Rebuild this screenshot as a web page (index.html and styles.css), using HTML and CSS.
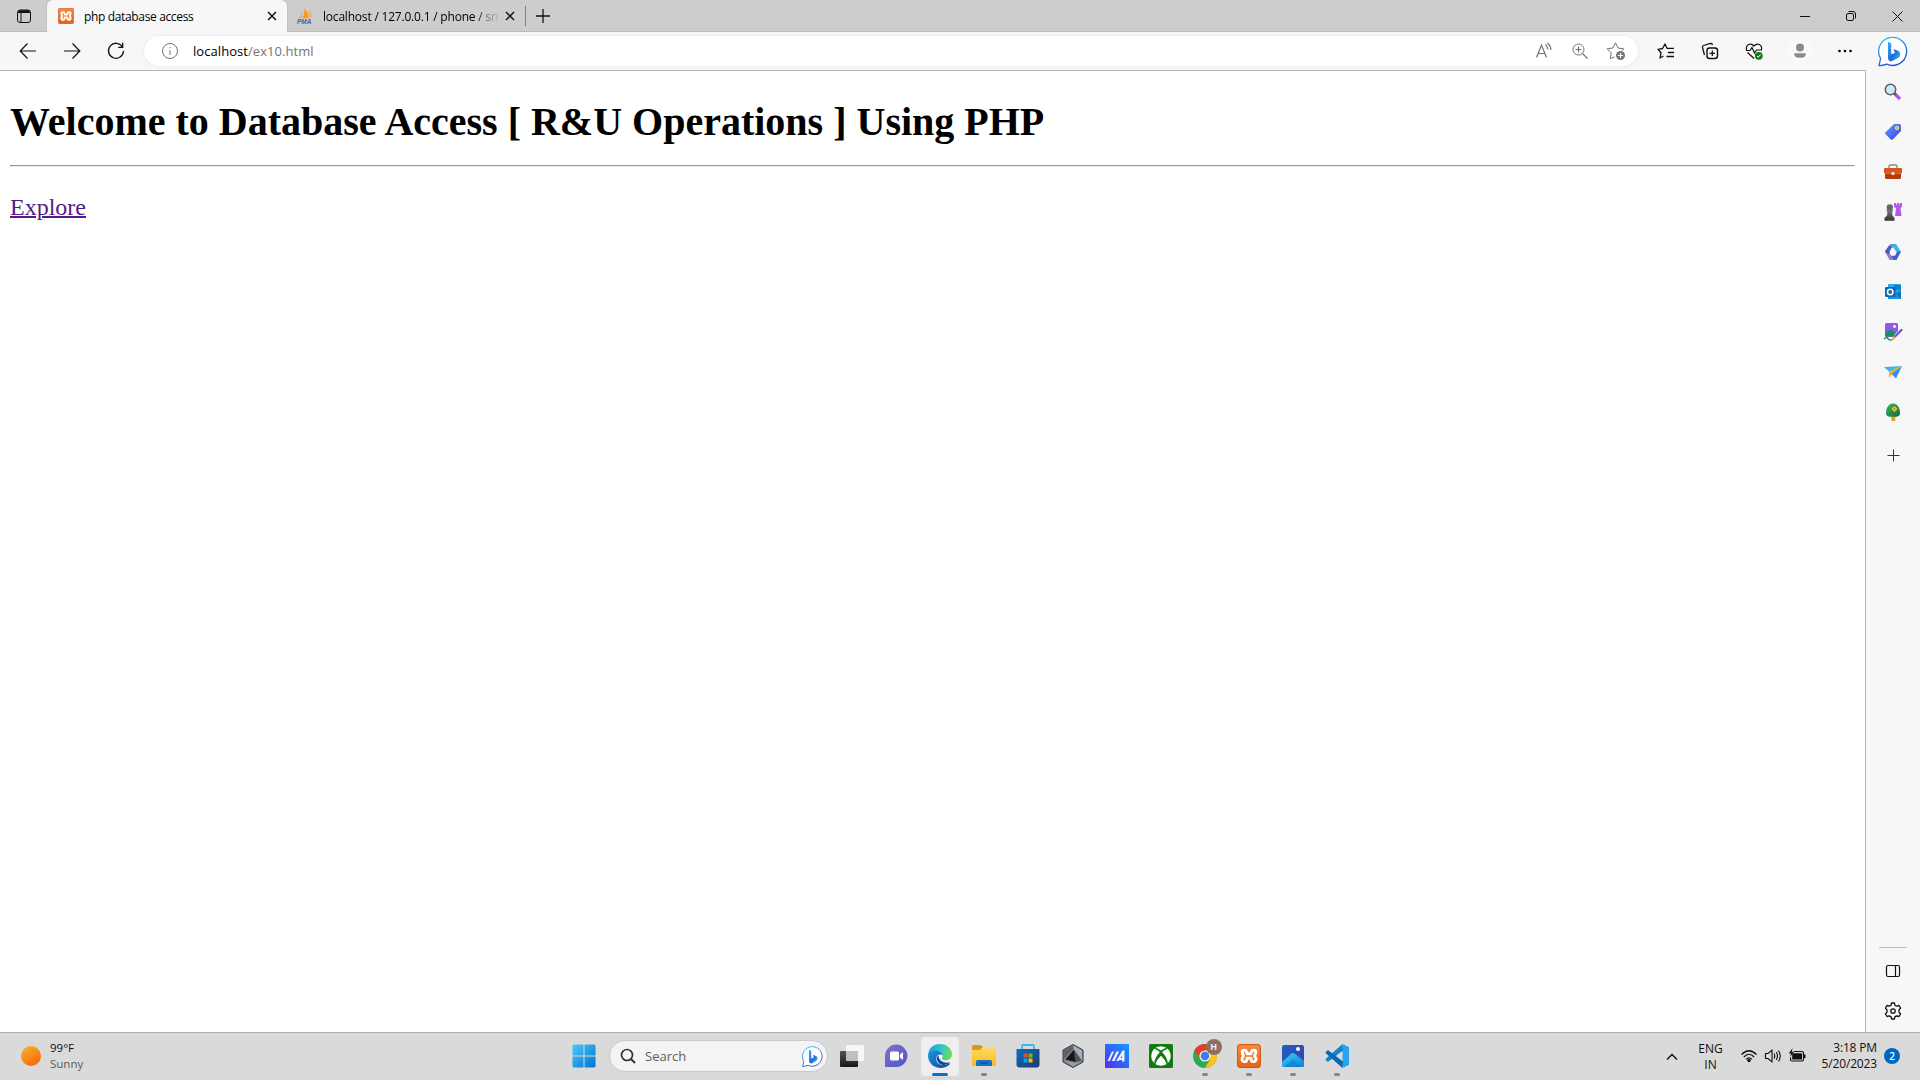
FILE: index.html
```html
<!DOCTYPE html>
<html lang="en">
<head>
<meta charset="utf-8">
<title>php database access</title>
<link rel="stylesheet" href="styles.css">
</head>
<body>
<svg class="defs" width="0" height="0" aria-hidden="true">
  <defs>
    <linearGradient id="bingRing" x1="0" y1="0" x2="0.5" y2="1"><stop offset="0" stop-color="#2fc3ee"/><stop offset="1" stop-color="#234fd0"/></linearGradient>
    <linearGradient id="bingB" x1="0" y1="0" x2="1" y2="1"><stop offset="0" stop-color="#36b6f4"/><stop offset=".55" stop-color="#2268e0"/><stop offset="1" stop-color="#35c5e8"/></linearGradient>
    <linearGradient id="sun" x1="0" y1="0" x2=".6" y2="1"><stop offset="0" stop-color="#f8b62d"/><stop offset="1" stop-color="#f76b0c"/></linearGradient>
    <linearGradient id="win" x1="0" y1="0" x2="1" y2="1"><stop offset="0" stop-color="#4cc8f8"/><stop offset="1" stop-color="#0072d2"/></linearGradient>
    <linearGradient id="tag" x1="0" y1="0" x2="1" y2="1"><stop offset="0" stop-color="#5fa0ff"/><stop offset="1" stop-color="#3d3fe0"/></linearGradient>
    <linearGradient id="purple" x1="0" y1="0" x2="1" y2="1"><stop offset="0" stop-color="#8a6fc8"/><stop offset="1" stop-color="#4a55c8"/></linearGradient>
    <linearGradient id="folder" x1="0" y1="0" x2="0" y2="1"><stop offset="0" stop-color="#ffd95e"/><stop offset="1" stop-color="#f9bb28"/></linearGradient>
    <linearGradient id="store" x1="0" y1="0" x2="1" y2="1"><stop offset="0" stop-color="#0b70c4"/><stop offset="1" stop-color="#20386c"/></linearGradient>
    <linearGradient id="dark" x1="0" y1="0" x2="0" y2="1"><stop offset="0" stop-color="#555"/><stop offset="1" stop-color="#161616"/></linearGradient>
    <linearGradient id="pawn" x1="0" y1="0" x2="0" y2="1"><stop offset="0" stop-color="#777"/><stop offset="1" stop-color="#333"/></linearGradient>
    <linearGradient id="asus" x1="0" y1="1" x2="1" y2="0"><stop offset="0" stop-color="#5a2bf0"/><stop offset="1" stop-color="#0c9cff"/></linearGradient>
    <linearGradient id="edgeTop" x1="0" y1=".3" x2="1" y2=".5"><stop offset="0" stop-color="#1b9de2"/><stop offset=".55" stop-color="#35c7c5"/><stop offset="1" stop-color="#6be04c"/></linearGradient>
    <linearGradient id="edgeLow" x1="0" y1="0" x2="1" y2="1"><stop offset="0" stop-color="#1d93dc"/><stop offset="1" stop-color="#0d4a98"/></linearGradient>
    <linearGradient id="photo" x1="0" y1="0" x2="1" y2="1"><stop offset="0" stop-color="#1d63c4"/><stop offset="1" stop-color="#4436a8"/></linearGradient>
    <linearGradient id="sky" x1="0" y1="0" x2="1" y2="1"><stop offset="0" stop-color="#3ed0f8"/><stop offset="1" stop-color="#0d7fd8"/></linearGradient>
    <linearGradient id="xampp" x1="0" y1="0" x2="0" y2="1"><stop offset="0" stop-color="#fb8a36"/><stop offset="1" stop-color="#e3641a"/></linearGradient>
    <linearGradient id="tree" x1="0" y1="0" x2="1" y2="1"><stop offset="0" stop-color="#3cb85c"/><stop offset="1" stop-color="#126c3c"/></linearGradient>
    <symbol id="bing" viewBox="0 0 30 30">
      <path d="M1 29.2 2.6 22A14 14 0 1 1 8.800 27.600Q5 29 1 29.200Z" fill="#fff" stroke="url(#bingRing)" stroke-width="1.300" stroke-linejoin="round"/>
      <path d="M10 5.300 13.200 6.700V17.800L17 16.500 15.700 13.300Q15.500 12.500 16.300 12.800L20 14.300Q22.400 15.500 22.200 18.300 22 20.400 20 21.600L14.200 24.600Q12.500 25.300 11 24 10 23 10 21.500Z" fill="url(#bingB)"/>
    </symbol>
    <symbol id="xamppLogo" viewBox="0 0 24 24">
      <rect x=".5" y=".5" width="23" height="23" rx="2.500" fill="url(#xampp)" stroke="#c65c1e"/>
      <path d="M7.500 6.200C5.500 6.200 4.700 7.300 5.300 8.800L6.300 12 5.200 14.300C4.500 16.400 6 17.900 8 17.600 9.900 17.400 10 16.200 9.900 14.200H14.100C14 16.200 14.100 17.400 16 17.600 18 17.900 19.500 16.400 18.800 14.300L17.700 12 18.700 8.800C19.300 7.300 18.500 6.200 16.500 6.200 14.200 6.200 14.100 7.900 14 9.800H10C9.900 7.900 9.800 6.200 7.500 6.200Z" fill="none" stroke="#fff" stroke-width="2.900" stroke-linejoin="round"/>
    </symbol>
    <symbol id="star" viewBox="0 0 20 20">
      <path d="M8.500 16 4.300 17.500 5.200 11.800 1.200 7.800 6.900 7 9.500 1.800 12.100 7 17.800 7.800 15.800 9.800" stroke-linejoin="round"/>
    </symbol>
  </defs>
</svg>

<div class="desktop">
  <header class="tabstrip">
    <div class="tab-actions"><svg class="line" width="16" height="16" viewBox="0 0 16 16"><rect x="1.500" y="2" width="13" height="12.500" rx="2.500"/><path d="M1.500 4.500H14.500M5 5V14" /><path d="M2.500 3.500H13.500" stroke-width="2.500"/></svg></div>
    <div class="tab tab-active">
      <svg width="16" height="16"><use href="#xamppLogo"/></svg>
      <span class="tab-title title-one">php database access</span>
      <svg class="line close" width="10" height="10" viewBox="0 0 10 10"><path d="M1 1 9 9M9 1 1 9" stroke-width="1.500"/></svg>
    </div>
    <div class="tab">
      <svg width="17" height="16" viewBox="0 0 17 16"><path d="M5.500 3V10H1.500Q4.500 7 5.500 3Z" fill="#e3ad72"/><path d="M7 .5Q12 5 11.500 10L6 10.500Q8 5 7 .5Z" fill="#f89c1c"/><path d="M11.500 2Q15.500 6 15 10H12.300Z" fill="#f5b455"/><text x="0" y="15.500" class="pma">PMA</text></svg>
      <span class="tab-title title-two">localhost / 127.0.0.1 / phone / sm</span>
      <svg class="line close" width="10" height="10" viewBox="0 0 10 10"><path d="M1 1 9 9M9 1 1 9" stroke-width="1.500"/></svg>
    </div>
    <div class="new-tab"><svg class="line" width="14" height="14" viewBox="0 0 14 14"><path d="M7 0V14M0 7H14" stroke-width="1.300"/></svg></div>
    <div class="window-controls">
      <span><svg class="line" width="10" height="10" viewBox="0 0 10 10"><path d="M0 5.500H10"/></svg></span>
      <span><svg class="line" width="12" height="12" viewBox="0 0 12 12"><rect x="1.500" y="3.500" width="7" height="7" rx="1.500"/><path d="M3.500 1.500H8Q10.500 1.500 10.500 4V8.500"/></svg></span>
      <span><svg class="line" width="11" height="11" viewBox="0 0 11 11"><path d="M.5 .5 10.500 10.500M10.500 .5 .5 10.500"/></svg></span>
    </div>
  </header>

  <div class="browser">
    <div class="main">
      <nav class="toolbar">
        <span class="tool"><svg class="line" width="18" height="18" viewBox="0 0 18 18"><path d="M17 9H1.500M8.500 1.500 1.200 9 8.500 16.500" stroke-width="1.200"/></svg></span>
        <span class="tool"><svg class="line" width="18" height="18" viewBox="0 0 18 18"><path d="M1 9H16.500M9.500 1.500 16.800 9 9.500 16.500" stroke-width="1.200"/></svg></span>
        <span class="tool"><svg class="line" width="18" height="18" viewBox="0 0 18 18"><path d="M15.500 5A7.500 7.500 0 1 0 16.500 9M15.700 .8V5.300H11.200" stroke-width="1.300"/></svg></span>
        <div class="address">
          <svg class="line gray" width="18" height="18" viewBox="0 0 18 18"><circle cx="9" cy="9" r="7.500"/><path d="M9 8V13M9 5V6.300"/></svg>
          <span class="url">localhost<span class="path">/ex10.html</span></span>
          <span class="address-icon"><svg class="line gray" width="18" height="18" viewBox="0 0 18 18"><path d="M1.500 15.500 6.500 3 11.500 15.500M3.300 11.500H9.800M10.500 2.500Q13 4.500 13 7.500M12.500 1Q16 4 15.800 8" stroke-width="1.200"/></svg></span>
          <span class="address-icon"><svg class="line gray" width="18" height="18" viewBox="0 0 18 18"><circle cx="7.500" cy="7.500" r="5.500"/><path d="M11.500 11.500 16.500 16.500M7.500 4.500V10.500M4.500 7.500H10.500" stroke-width="1.200"/></svg></span>
          <span class="address-icon"><svg class="line gray" width="20" height="20" viewBox="0 0 20 20"><use href="#star"/><circle cx="14.500" cy="14.500" r="4.500" fill="#777" stroke="none"/><path d="M14.500 12V17M12 14.500H17" stroke="#fff"/></svg></span>
        </div>
        <span class="tool fav"><svg class="line" width="18" height="18" viewBox="0 0 18 18"><path d="M6.500 14 3 16 4 10.700 1 7.300 5.500 6.500 8 2 10 6.300H17M11 10.500H17M9.500 14.500H17" stroke-width="1.300" stroke-linejoin="round"/></svg></span>
        <span class="tool"><svg class="line" width="18" height="18" viewBox="0 0 18 18"><rect x="6" y="6" width="10.500" height="10.500" rx="2.500" stroke-width="1.400"/><path d="M11.300 8.500V14M8.500 11.300H14M3.500 13 1.500 5.500Q1 4 2.500 3.500L9.500 1.500Q11 1.200 11.500 3" stroke-width="1.300"/></svg></span>
        <span class="tool"><svg class="line" width="18" height="18" viewBox="0 0 18 18"><path d="M1.500 8C.5 2 6 .500 9 4 12 .500 17.500 2 16.500 8M2.500 10.500 9 16.500M1 8.500H5L7 5.500 9.500 11 11.500 8H17" stroke-width="1.200"/><circle cx="13.800" cy="13.800" r="3.900" fill="#107c10" stroke="none"/><path d="m12 14 1.300 1.200 2.300-2.700" stroke="#fff"/></svg></span>
        <span class="tool profile"><svg width="24" height="24" viewBox="0 0 24 24"><circle cx="12" cy="12" r="12" fill="#fafafa"/><circle cx="12" cy="8.500" r="4" fill="#8b8b8b"/><path d="M6.300 14.200H17.700Q18.500 18.800 12 18.800T6.300 14.200Z" fill="#8b8b8b"/></svg></span>
        <span class="tool more"><svg width="16" height="4" viewBox="0 0 16 4"><circle cx="2.500" cy="2" r="1.300"/><circle cx="8" cy="2" r="1.300"/><circle cx="13.500" cy="2" r="1.300"/></svg></span>
      </nav>
      <main class="page">
        <h1>Welcome to Database Access [ R&amp;U Operations ] Using PHP</h1>
        <hr>
        <a href="#">Explore</a>
      </main>
    </div>

    <aside class="sidebar">
      <span class="side-bing"><svg width="30" height="31"><use href="#bing"/></svg></span>
      <span><svg width="18" height="18" viewBox="0 0 18 18"><path d="m10.500 10.500 5.500 5.500" stroke="#b94ee8" stroke-width="3.200"/><path d="m9.500 9.500 2.300 2.300" stroke="#555" stroke-width="2"/><circle cx="6.500" cy="6.500" r="5.200" fill="#cdeaf8" stroke="#5f5f5f" stroke-width="1.500"/></svg></span>
      <span><svg width="18" height="18" viewBox="0 0 18 18"><path d="M10 1H15.500Q17 1 17 2.500V8L9 16.300Q7.800 17.400 6.600 16.300L1.500 11.300Q.6 10.200 1.500 9.200Z" fill="url(#tag)"/><circle cx="13" cy="5" r="1.700" fill="#d9b23d" stroke="#ffe15c"/></svg></span>
      <span><svg width="18" height="16" viewBox="0 0 18 16"><path d="M5 5V2.500Q5 1 6.500 1H11.500Q13 1 13 2.500V5" fill="none" stroke="#888" stroke-width="1.400"/><rect y="4" width="18" height="5.500" rx="1" fill="#d9551e"/><path d="M1 9.500H17V13.500Q17 15 15.500 15H2.500Q1 15 1 13.500Z" fill="#b83a12"/><circle cx="9" cy="9.500" r="1.700" fill="#ddd"/></svg></span>
      <span><svg width="18" height="18" viewBox="0 0 18 18"><path d="M10 0H12V1.500H13V0H15V1.500H16V0H18V4L16.500 5 17.500 13H11L12 5 10 4Z" fill="#b755ef"/><circle cx="5.800" cy="4.500" r="3.200" fill="#666"/><path d="M2.500 7H9V8.500H8L8.500 12.500 10.500 15V17.800H.5V15L3 12.500 3.500 8.500H2.500Z" fill="url(#pawn)"/></svg></span>
      <span><svg width="18" height="18" viewBox="0 0 18 18"><path d="M6.500 1H11.500L7.500 4.500 5.500 8.500V12.500L3 12 .8 8.500Z" fill="#5a8ee0"/><path d="M9.500 1H12L16.800 8.500 14.500 13 12.800 9.500 9.500 4.500H6.500Z" fill="#36b4e6"/><path d="M17 8.500 12.500 17H8L6 12.800H11L13 9Z" fill="#3a62cc"/><path d="M1 8.500 3.500 11.500H6.500L9.500 17H5.500Z" fill="#a774d2"/><path d="M5 2.500 9 4.500H7.500L5.500 8.500V12L1 8.500Z" fill="#5b52c0"/></svg></span>
      <span><svg width="18" height="18" viewBox="0 0 18 18"><rect x="4" y="1" width="13" height="15" rx="1" fill="#28a8e8"/><path d="M10 2H17V7H10Z" fill="#0c83ce"/><path d="M4 16V10L17 8V16Z" fill="#1995dc"/><path d="m12 11 5-3v8z" fill="#1272bd"/><rect x="1" y="4" width="10.500" height="10" rx="1" fill="#0967b6"/><circle cx="6.200" cy="9" r="2.700" fill="none" stroke="#fff" stroke-width="1.600"/></svg></span>
      <span><svg width="20" height="18" viewBox="0 0 20 18"><rect x="2" width="13" height="14" rx="1.500" fill="#9159e5"/><circle cx="11.500" cy="3.500" r="1.400" fill="#fff"/><path d="M2 10.500 8 6.500 14 10.500 11 13.500H2Z" fill="#149261"/><path d="M0 14.200H10V18H0Z" fill="#f7f7f7"/><path d="M1 16Q4 13.500 5 15.500T9 17" fill="none" stroke="#159165" stroke-width="1.500"/><path d="m18.700 7.200-6.500 6.500" stroke="#f7f7f7" stroke-width="4"/><path d="m18.500 7-6.500 6.500" stroke="#6454dc" stroke-width="2.300" stroke-linecap="round"/><path d="M8.500 17.500Q9 13 11.500 13.500T11 17Z" fill="#f2b933"/></svg></span>
      <span><svg width="18" height="14" viewBox="0 0 18 14"><path d="M0 2 18 1 5.500 7Z" fill="#45b5ef"/><path d="M5 6.500 18 1 7.500 10 5 13Z" fill="#f6b126"/><path d="M7.500 9 18 1 12 13.500Z" fill="#348ff0"/></svg></span>
      <span><svg width="18" height="20" viewBox="0 0 18 20"><rect x="7.300" y="13" width="4" height="6" rx="1" fill="#e99b25"/><path d="M9 1.500C4.500 1.500 2 6 2 11Q2 14.800 6 14.800H12Q16 14.800 16 11C16 6 13.500 1.500 9 1.500Z" fill="url(#tree)"/><path d="M10.500 4.200 12 5.500 13.500 7 12 8.500 10.500 10 9 8.500 7.500 7 9 5.500Z" fill="#f8cf33"/><circle cx="10.500" cy="7" r="1" fill="#d86b13"/></svg></span>
      <span class="side-add"><svg class="line" width="13" height="13" viewBox="0 0 13 13"><path d="M6.500 .5V12.500M.5 6.500H12.500" stroke="#333"/></svg></span>
      <i class="side-rule"></i>
      <span><svg class="line" width="16" height="14" viewBox="0 0 16 14"><rect x="1.500" y="1.500" width="13" height="11" rx="1.500" stroke-width="1.200"/><path d="M10.500 1.500V12.500" stroke-width="1.200"/></svg></span>
      <span><svg class="line" width="18" height="18" viewBox="0 0 18 18"><path d="M7.600 1H10.400L11 3.300Q11.900 3.600 12.600 4.100L15 3.500 16.600 6 15 7.900V10.100L16.600 12 15 14.500 12.600 13.900Q11.900 14.400 11 14.700L10.400 17H7.600L7 14.700Q6.100 14.400 5.400 13.900L3 14.500 1.400 12 3 10.100V7.900L1.400 6 3 3.500 5.400 4.100Q6.100 3.600 7 3.300Z" stroke-width="1.300" stroke-linejoin="round"/><circle cx="9" cy="9" r="2.200" stroke-width="1.300"/></svg></span>
    </aside>
  </div>

  <footer class="taskbar">
    <div class="weather">
      <svg width="20" height="20" viewBox="0 0 20 20"><circle cx="10" cy="10" r="10" fill="url(#sun)"/></svg>
      <div><div>99°F</div><div class="muted">Sunny</div></div>
    </div>
    <div class="apps">
      <svg class="start" width="24" height="24" viewBox="0 0 24 24"><path d="M2 .5H11.500V11.500H.5V2Q.5.5 2 .5ZM12.500.5H22Q23.500.5 23.500 2V11.500H12.500ZM.5 12.500H11.500V23.500H2Q.5 23.500.5 22ZM12.500 12.500H23.500V22Q23.500 23.500 22 23.500H12.500Z" fill="url(#win)"/></svg>
      <div class="search">
        <svg class="line" width="16" height="16" viewBox="0 0 16 16"><circle cx="7" cy="7" r="5.500" stroke="#333" stroke-width="1.700"/><path d="m11 11 4 4" stroke="#333" stroke-width="2"/></svg>
        <span>Search</span>
        <svg width="21" height="21"><use href="#bing"/></svg>
      </div>
      <span class="app"><svg width="24" height="24" viewBox="0 0 24 24"><rect y="7" width="18" height="16" rx="1" fill="url(#dark)"/><rect x="6" y="1" width="18" height="16" rx="1" fill="#fff" fill-opacity=".78"/><path d="M6 7H18V17H6Z" fill="#aaa" fill-opacity=".5"/></svg></span>
      <span class="app"><svg width="24" height="24" viewBox="0 0 24 24"><path d="M1 23V12A11.200 11.200 0 1 1 12 23Z" fill="url(#purple)"/><rect x="6" y="7.500" width="9" height="9" rx="1.500" fill="#fff"/><path d="m16 10.500 3-2.500v8l-3-2.500z" fill="#fff"/></svg></span>
      <span class="app active"><svg width="24" height="24" viewBox="0 0 24 24"><path d="M.2 13C-.5 5 5 0 12 0S24 5 24 10C24 14 21 16.300 17.500 16.300 14.500 16.300 13 15 14.500 12.800 15.300 10 13 7.500 9.500 7.500 5 7.500 1 9.500.2 13Z" fill="url(#edgeTop)"/><path d="M.1 12C.5 8.500 4 6.500 8 6.500 11.500 6.500 14.500 9 14.600 11.500 11 9 7.500 12 8.500 16.500 9.500 21 15 22.500 20.500 19.500 22 19 22.400 19.500 21 21 15 26 5 24.500 1.500 17.500Q0 15 .1 12Z" fill="url(#edgeLow)"/><path d="M10.500 11.500C8 13 8.500 18 12 20S20 20.500 22 18C19 19.500 11 19 10.500 11.500Z" fill="#0d4c94"/><path d="M11 12Q13 9.500 14.600 12 13 14 14.500 16 10.800 15.500 11 12Z" fill="#f1f6f8"/></svg><i class="mark wide"></i></span>
      <span class="app"><svg width="24" height="24" viewBox="0 0 24 24"><path d="M0 2.500Q0 1 1.500 1H8.500L11 3.500 8.500 6H0Z" fill="#d79917"/><path d="M0 6H8L10.500 3.500H22.500Q24 3.500 24 5V22H0Z" fill="url(#folder)"/><path d="M4 22V18Q4 16 6 16H18Q20 16 20 18V22Z" fill="#1676c6"/><path d="M8 19H16" stroke="#075aa4" stroke-width="1.500"/></svg><i class="mark"></i></span>
      <span class="app"><svg width="24" height="24" viewBox="0 0 24 24"><path d="M6 6V2Q6 1 7 1H17Q18 1 18 2V6" fill="none" stroke="#36b9ef" stroke-width="1.800"/><path d="M.5 5H23.500V20.500Q23.500 23.500 20.500 23.500H3.500Q.5 23.500 .5 20.500Z" fill="url(#store)"/><path d="M7.500 9.500H11.500V13.500H7.500Z" fill="#f25022"/><path d="M12.500 9.500H16.500V13.500H12.500Z" fill="#7fba00"/><path d="M7.500 14.500H11.500V18.500H7.500Z" fill="#00a4ef"/><path d="M12.500 14.500H16.500V18.500H12.500Z" fill="#ffb900"/></svg></span>
      <span class="app"><svg width="24" height="24" viewBox="0 0 24 24"><path d="M12 .5 22 6V18L12 23.500 2 18V6Z" fill="#7d848b" stroke="#343a40"/><path d="M12 1.500 3 6.500V15L12 5Z" fill="#5b6268"/><path d="M12 1.500 21 6.500V16L13 5.500Z" fill="#a9b0b6"/><path d="M13 5.500 20.500 16.500 14.500 18Z" fill="#4d545a"/><path d="M13 5.500 4.500 15.500 14.500 18Z" fill="#15181b"/><path d="M3.500 17 14.500 19 20.500 17.500 12 22.500Z" fill="#969da3"/></svg></span>
      <span class="app"><svg width="24" height="24" viewBox="0 0 24 24"><rect width="24" height="24" fill="url(#asus)"/><path d="M2.500 17 7 7.500H9L4.700 17ZM6.800 17 11.500 7.500H14L9.500 17ZM11.200 17 17.500 6.500H19.500V17.500H17V11.500L13.700 17Z" fill="#e9f2ff"/><path d="M14.500 14H17V16H13.500Z" fill="#e9f2ff"/></svg></span>
      <span class="app"><svg width="24" height="24" viewBox="0 0 24 24"><rect width="24" height="24" rx="1.500" fill="#107c10"/><circle cx="12" cy="12" r="9.800" fill="#fff"/><path d="M5.500 3.800Q8 3.500 12 6.500 16 3.500 18.500 3.800L17.500 5.500Q15.500 5.500 12 8.300 8.500 5.500 6.500 5.500Z" fill="#107c10"/><path d="M6.500 5.500Q9 5.800 10.800 8.200 6 13 5 19.300L6.300 20.600Q8 15 12 11.700 16 15 17.700 20.600L19 19.300Q18 13 13.200 8.200 15 5.800 17.500 5.500L12 7Z" fill="#107c10"/></svg></span>
      <span class="app"><svg width="24" height="24" viewBox="0 0 24 24"><circle cx="12" cy="12" r="12" fill="#2da94f"/><path d="M1.600 6A12 12 0 0 1 22.400 6H12L6.800 15Z" fill="#e33b2e"/><path d="M12 6H22.400A12 12 0 0 1 12 24L17.200 15Z" fill="#fcc31e"/><circle cx="12" cy="12" r="5.600" fill="#fff"/><circle cx="12" cy="12" r="4.400" fill="#3f7fea"/></svg><b class="avatar">H</b><i class="mark"></i></span>
      <span class="app"><svg width="24" height="24"><use href="#xamppLogo"/></svg><i class="mark"></i></span>
      <span class="app"><svg width="24" height="24" viewBox="0 0 24 24"><rect x="1" y="1" width="22" height="22" rx="2" fill="url(#photo)"/><path d="M1 18 10.500 9.500Q12 8.300 13.500 9.500L23 17V21Q23 23 21 23H3Q1 23 1 21Z" fill="url(#sky)"/><path d="M3 23 12 15 19 23Z" fill="#0b72cf" opacity=".5"/><circle cx="17" cy="5" r="2" fill="#fff"/></svg><i class="mark"></i></span>
      <span class="app"><svg width="24" height="24" viewBox="0 0 24 24"><path d="M17.500 0 24 3V21L17.500 24Z" fill="#28a3ed"/><path d="M17.500 0 .3 15.200 2.800 18 18 6.500Z" fill="#1382cc"/><path d="M17.500 24 .3 8.800 2.800 6 18 17.500Z" fill="#0869b3"/></svg><i class="mark"></i></span>
    </div>
    <div class="tray">
      <span class="chevron"><svg class="line" width="12" height="8" viewBox="0 0 12 8"><path d="M1 6.500 6 1.500 11 6.500" stroke-width="1.500"/></svg></span>
      <span class="lang">ENG<br>IN</span>
      <span class="status">
        <svg class="line" width="18" height="14" viewBox="0 0 18 14"><path d="M1.500 5.500Q9-2 16.500 5.500M3.800 8Q9 2.500 14.200 8M6 10.300Q9 7.300 12 10.300" stroke-width="1.200"/><circle cx="9" cy="11.500" r="1.700" fill="#111" stroke="none"/></svg>
        <svg class="line" width="18" height="14" viewBox="0 0 18 14"><path d="M1.500 4.500H4L8 1.200V12.800L4 9.500H1.500ZM10 4.500Q11.500 7 10 9.500M12.300 3Q14.700 7 12.300 11M14.500 1.500Q18 7 14.500 12.500" stroke-width="1.100"/></svg>
        <svg width="18" height="16" viewBox="0 0 18 16"><path d="M6 3.500H14Q15.500 3.500 15.500 5V11.500Q15.500 13 14 13H4Q2.500 13 2.500 11.500V9.500" fill="none" stroke="#111" stroke-width="1.200"/><rect x="4.200" y="5.200" width="9.800" height="6.200" rx=".5" fill="#111"/><path d="M16 6.500h1.500v3.500H16zM4.500 0 .8 5.500H3L2.200 9 6 3.800H3.800Z" fill="#111"/></svg>
      </span>
      <span class="clock"><span>3:18 PM</span><br><span>5/20/2023</span></span>
      <b class="badge">2</b>
    </div>
  </footer>
</div>
</body>
</html>
```

FILE: styles.css
```css
* { box-sizing: border-box; }

body {
  margin: 0;
  overflow: hidden;
  font-family: "Open Sans", "Noto Sans", sans-serif;
  font-size: 12px;
  color: #111;
}

svg { display: block; flex: none; }
.defs { position: absolute; }
.line { fill: none; stroke: #111; stroke-width: 1; }
.gray { stroke: #737373; }

.desktop {
  width: 1920px;
  height: 1080px;
  display: flex;
  flex-direction: column;
}

/* Tab strip */
.tabstrip {
  height: 32px;
  display: flex;
  background: #cdcdcd;
  box-shadow: inset 0 -1px #bdbdbd;
}
.tab-actions, .new-tab, .window-controls span {
  display: flex;
  align-items: center;
  justify-content: center;
}
.tab-actions { width: 47px; }
.tab {
  width: 238px;
  display: flex;
  align-items: center;
  padding: 0 10px 0 10px;
}
.tab-active {
  width: 240px;
  padding-left: 11px;
  background: #f7f7f7;
  border-radius: 6px 6px 0 0;
  box-shadow: 0 0 2px #aaa;
  clip-path: inset(0 -3px 0 -3px);
}
.tab-title {
  flex: 1;
  margin-left: 10px;
  white-space: nowrap;
  font-size: 12px;
  color: #000;
}
.title-one { letter-spacing: -0.35px; }
.title-two {
  width: 174px;
  margin-left: 9px;
  letter-spacing: -0.2px;
  -webkit-mask-image: linear-gradient(90deg, #000 152px, transparent 176px);
  mask-image: linear-gradient(90deg, #000 152px, transparent 176px);
}
.pma { font: italic bold 6.500px "Liberation Sans", sans-serif; fill: #555b91; }
.new-tab { width: 36px; position: relative; }
.new-tab::before {
  content: "";
  position: absolute;
  left: 0;
  top: 6px;
  width: 1px;
  height: 20px;
  background: #808080;
}
.window-controls { display: flex; margin-left: auto; }
.window-controls span { width: 46px; }

/* Browser body */
.browser { flex: 1; display: flex; min-height: 0; }
.main { width: 1865px; display: flex; flex-direction: column; }
.toolbar {
  height: 38px;
  display: flex;
  align-items: center;
  padding-left: 6px;
  background: #f7f7f7;
}
.tool { width: 44px; display: flex; justify-content: center; flex: none; }
.tool.fav { margin-left: 6px; }
.tool.profile { width: 47px; }
.tool.more { width: 42px; padding-left: 2px; }
.address {
  flex: 1;
  height: 30px;
  margin-left: 6px;
  padding: 0 4px 0 17px;
  display: flex;
  align-items: center;
  background: #fff;
  border-radius: 15px;
  box-shadow: 0 0 3px #e2e2e2;
}
.url { flex: 1; margin-left: 14px; font-size: 13px; letter-spacing: 0.06px; color: #000; }
.path { color: #737373; }
.address-icon { width: 36px; display: flex; justify-content: center; }

/* Document */
.page {
  flex: 1;
  padding: 0 10px;
  background: #fff;
  border-top: 1px solid #b5b5b5;
  font-family: "Liberation Serif", serif;
  font-size: 24px;
  color: #000;
}
.page h1 { margin: 27px 0 20px; font-size: 40px; line-height: 47px; }
.page hr {
  margin: 0 0 27px;
  border: solid;
  border-width: 1px;
  border-color: #959595 #eee #eee #959595;
}
.page a { color: #551a8b; text-decoration-thickness: 2px; }

/* Sidebar */
.sidebar {
  width: 55px;
  display: flex;
  flex-direction: column;
  align-items: center;
  background: linear-gradient(#b5b5b5, #b5b5b5) 0 38px / 1px 100% no-repeat #f7f7f7;
}
.sidebar span {
  height: 40px;
  padding-left: 1px;
  display: flex;
  align-items: center;
  justify-content: center;
}
.sidebar .side-bing { height: 40px; padding-bottom: 1px; }
.sidebar .side-add { height: 47px; }
.side-rule {
  width: 28px;
  height: 1px;
  margin: auto 0 3px;
  background: #b9b9b9;
}
.sidebar::after { content: ""; height: 1px; }

/* Taskbar */
.taskbar {
  height: 48px;
  display: flex;
  background: #dadada;
  border-top: 1px solid #adadad;
}
.weather {
  width: 572px;
  padding: 0 0 2px 21px;
  display: flex;
  align-items: center;
  gap: 9px;
  font-size: 11.500px;
  line-height: 16px;
}
.muted { color: #5b5b5b; }
.apps { display: flex; align-items: center; padding-bottom: 1px; }
.start { margin-right: 13px; }
.search {
  width: 219px;
  height: 32px;
  margin-right: 2px;
  padding: 0 4px 0 10px;
  display: flex;
  align-items: center;
  background: #f4f4f4;
  border: 1px solid #cacaca;
  border-radius: 16px;
}
.search span { flex: 1; margin-left: 9px; font-size: 13px; color: #606060; }
.app {
  position: relative;
  width: 38px;
  height: 39px;
  margin: 0 3.050px;
  display: flex;
  align-items: center;
  justify-content: center;
  border-radius: 4px;
}
.app.active { background: #eee; }
.mark {
  position: absolute;
  bottom: 0;
  left: 16px;
  width: 6px;
  height: 3px;
  border-radius: 2px;
  background: #858585;
}
.mark.wide { left: 11px; width: 16px; background: #0a70ca; }
.avatar {
  position: absolute;
  left: 20px;
  top: 2px;
  width: 16px;
  height: 16px;
  border-radius: 50%;
  background: #8d6e63;
  color: #eee;
  font-size: 9px;
  line-height: 16px;
  text-align: center;
}
.tray {
  margin-left: auto;
  padding-right: 20px;
  display: flex;
  align-items: center;
  font-size: 12px;
  line-height: 16px;
}
.chevron { margin-right: 20px; padding-left: 1px; }
.lang { width: 25px; text-align: center; }
.status { display: flex; align-items: center; gap: 6px; margin-left: 17px; padding-bottom: 1px; }
.clock { width: 71px; text-align: right; white-space: nowrap; padding-bottom: 1px; letter-spacing: -0.15px; }
.badge {
  width: 16px;
  height: 16px;
  margin: 0 0 1px 7px;
  border-radius: 50%;
  background: #0067c0;
  color: #fff;
  font-size: 10px;
  font-weight: 600;
  line-height: 16px;
  text-align: center;
}
```
